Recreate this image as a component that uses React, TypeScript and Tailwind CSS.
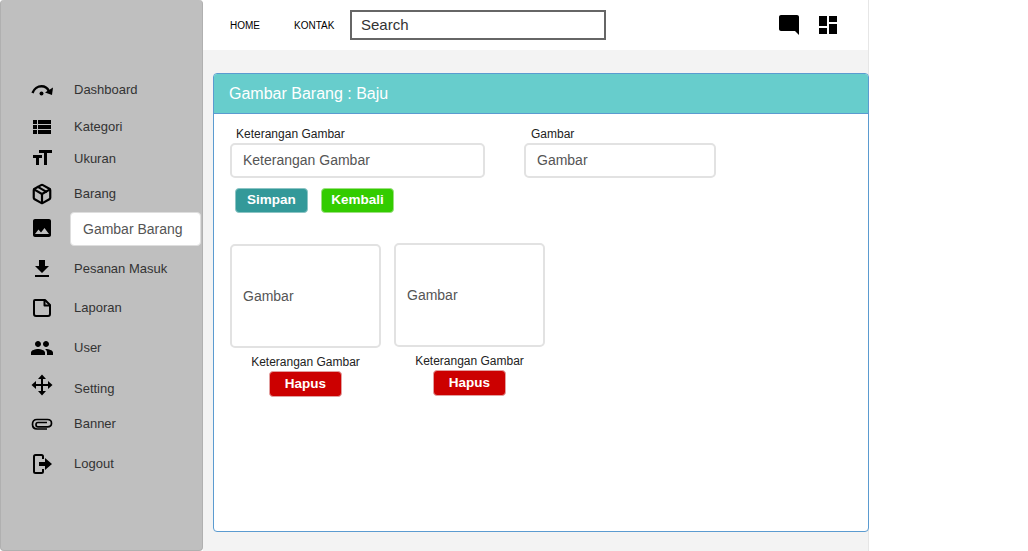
import { type ReactNode } from 'react';
import { Package } from 'lucide-react';
import {
  MdDashboard,
  MdFileDownload,
  MdFormatSize,
  MdPeople,
  MdPhoto,
  MdViewList,
} from 'react-icons/md';

function SpeedIcon() {
  return (
    <svg width="24" height="24" viewBox="0 0 24 24" fill="none">
      <path d="M2.5 15C4 10.5 8 8.2 11.5 8.2C15 8.2 17.5 10 18.8 13" stroke="#000" strokeWidth="2.4" />
      <path d="M23 9.5L22 17L15 14.5Z" fill="#000" />
      <circle cx="11.5" cy="15.5" r="2" fill="#000" />
    </svg>
  );
}

function NoteIcon() {
  return (
    <svg width="24" height="24" viewBox="0 0 24 24" fill="none" stroke="#000" strokeWidth="2" strokeLinejoin="round">
      <path d="M5 4H15L20 9V18C20 19.2 19.2 20 18 20H6C4.8 20 4 19.2 4 18V5C4 4.5 4.5 4 5 4Z" />
      <path d="M14.5 4V9.5H20" />
    </svg>
  );
}

function MoveIcon() {
  return (
    <svg width="24" height="24" viewBox="0 0 24 24" fill="none">
      <path d="M12 5V19M5 12H19" stroke="#000" strokeWidth="2" />
      <path d="M12 1.5L16 6H8ZM12 22.5L8 18H16ZM1.5 12L6 8V16ZM22.5 12L18 16V8Z" fill="#000" />
    </svg>
  );
}

function ClipIcon() {
  return (
    <svg width="24" height="24" viewBox="0 0 24 24" fill="none">
      <path d="M17 17H7C4.2 17 2.5 15 2.5 12.3C2.5 9.6 4.2 7.5 7 7.5H17.5C20 7.5 21.5 9.2 21.5 11.2C21.5 13.2 20 14.8 17.5 14.8H8C6.8 14.8 6 14 6 12.7C6 11.4 6.8 10.5 8 10.5H17" stroke="#000" strokeWidth="1.7" />
    </svg>
  );
}

function LogoutIcon() {
  return (
    <svg width="24" height="24" viewBox="0 0 24 24" fill="none">
      <path d="M13 7V4.5C13 3.6 12.4 3 11.5 3H5.5C4.6 3 4 3.6 4 4.5V19.5C4 20.4 4.6 21 5.5 21H11.5C12.4 21 13 20.4 13 19.5V17" stroke="#000" strokeWidth="2" />
      <path d="M9 10H15V6L22 12L15 18V14H9Z" fill="#000" />
    </svg>
  );
}

function ChatIcon() {
  return (
    <svg width="24" height="24" viewBox="0 0 24 24" fill="#000">
      <path d="M4 2H20C21.1 2 22 2.9 22 4V22L18 18H4C2.9 18 2 17.1 2 16V4C2 2.9 2.9 2 4 2Z" />
    </svg>
  );
}

const menuItems: { label: string; icon: ReactNode; row: string; iconBox?: string; active?: boolean }[] = [
  { label: 'Dashboard', icon: <SpeedIcon />, row: 'mt-[78px]' },
  { label: 'Kategori', icon: <MdViewList size={24} />, row: 'mt-[13px]' },
  { label: 'Ukuran', icon: <MdFormatSize size={24} />, row: 'mt-[8px]', iconBox: 'pb-[2px]' },
  { label: 'Barang', icon: <Package size={22} strokeWidth={2.4} />, row: 'mt-[11px]' },
  { label: 'Gambar Barang', icon: <MdPhoto size={24} />, row: 'mt-[12px]', iconBox: 'pb-[4px]', active: true },
  { label: 'Pesanan Masuk', icon: <MdFileDownload size={24} />, row: 'mt-[15px]' },
  { label: 'Laporan', icon: <NoteIcon />, row: 'mt-[15px]' },
  { label: 'User', icon: <MdPeople size={26} />, row: 'mt-[16px]' },
  { label: 'Setting', icon: <MoveIcon />, row: 'mt-[17px]', iconBox: 'pb-[8px]' },
  { label: 'Banner', icon: <ClipIcon />, row: 'mt-[11px]' },
  { label: 'Logout', icon: <LogoutIcon />, row: 'mt-[16px]' },
];

function GambarCard({ shift }: { shift: string }) {
  return (
    <div className={`w-[151px] flex flex-col items-center ${shift}`}>
      <div className="w-full h-[104px] border-2 border-[#e2e2e2] rounded-[5px] bg-white flex items-center pl-[11px] text-[14px] text-[#555]">
        Gambar
      </div>
      <div className="mt-[6px] h-[16px] leading-[16px] text-[12px] text-[#222]">Keterangan Gambar</div>
      <button className="mt-[1px] w-[73px] h-[26px] rounded-[4px] bg-[#cc0000] border border-[#e2a0a0] text-white text-[13.5px] font-bold">
        Hapus
      </button>
    </div>
  );
}

export default function App() {
  return (
    <div className="w-[1028px] h-[551px] bg-white overflow-hidden flex font-['Liberation_Sans',Arial,sans-serif]">
      <aside className="w-[203px] h-[551px] shrink-0 bg-[#bfbfbf] border border-[#b0b0b0] border-t-0 rounded-[4px] flex flex-col">
        {menuItems.map((item) => (
          <div key={item.label} className={`h-6 flex items-center shrink-0 ${item.row}`}>
            <div className={`w-[24px] ml-[29px] flex justify-center text-black ${item.iconBox ?? ''}`}>{item.icon}</div>
            {item.active ? (
              <div className="ml-[16px] mb-[2px] w-[131px] h-[34px] shrink-0 bg-white rounded-[4px] border border-[#dedede] flex items-center pl-[12px] text-[14px] text-[#555]">
                {item.label}
              </div>
            ) : (
              <span className="ml-[20px] text-[13px] text-[#333]">{item.label}</span>
            )}
          </div>
        ))}
      </aside>

      <div className="w-[666px] h-[551px] shrink-0 bg-[#f3f3f3] border-r border-[#e6e6e6] flex flex-col">
        <header className="h-[50px] shrink-0 bg-white flex items-center">
          <span className="ml-[27px] w-[64px] text-[10px] text-black">HOME</span>
          <span className="w-[56px] text-[10px] text-black">KONTAK</span>
          <div className="w-[256px] h-[30px] border-2 border-[#666] flex items-center pl-[9px] pt-px text-[15px] text-[#333]">
            Search
          </div>
          <div className="ml-[171px]">
            <ChatIcon />
          </div>
          <MdDashboard size={24} className="ml-[15px] text-black" />
        </header>

        <main className="mt-[23px] ml-[10px] w-[656px] shrink-0 h-[459px] bg-white border border-[#5b9bd0] rounded-[4px] flex flex-col">
          <div className="h-[40px] shrink-0 bg-[#67cdcc] border-b border-[#5b9bd0] rounded-t-[3px] flex items-center pl-[15px] text-white text-[16px]">
            Gambar Barang : Baju
          </div>
          <div className="pl-[16px] pt-[13px]">
            <div className="flex gap-[39px]">
              <div className="w-[255px]">
                <div className="pl-[6px] h-[15px] leading-[15px] text-[12px] text-[#222]">Keterangan Gambar</div>
                <div className="mt-[1px] h-[35px] border-2 border-[#e2e2e2] rounded-[5px] flex items-center pl-[11px] text-[14px] text-[#555]">
                  Keterangan Gambar
                </div>
              </div>
              <div className="w-[192px]">
                <div className="pl-[7px] h-[15px] leading-[15px] text-[12px] text-[#222]">Gambar</div>
                <div className="mt-[1px] h-[35px] border-2 border-[#e2e2e2] rounded-[5px] flex items-center pl-[11px] text-[14px] text-[#555]">
                  Gambar
                </div>
              </div>
            </div>
            <div className="mt-[10px] ml-[5px] flex gap-[13px]">
              <button className="w-[73px] h-[25px] rounded-[4px] bg-[#339999] border border-[#8cc4c4] text-white text-[13.5px] font-bold">
                Simpan
              </button>
              <button className="w-[73px] h-[25px] rounded-[4px] bg-[#33cc00] border border-[#9ce080] text-white text-[13.5px] font-bold">
                Kembali
              </button>
            </div>
            <div className="mt-[30px] flex items-start gap-[13px]">
              <GambarCard shift="pt-px" />
              <GambarCard shift="" />
            </div>
          </div>
        </main>
      </div>
    </div>
  );
}
